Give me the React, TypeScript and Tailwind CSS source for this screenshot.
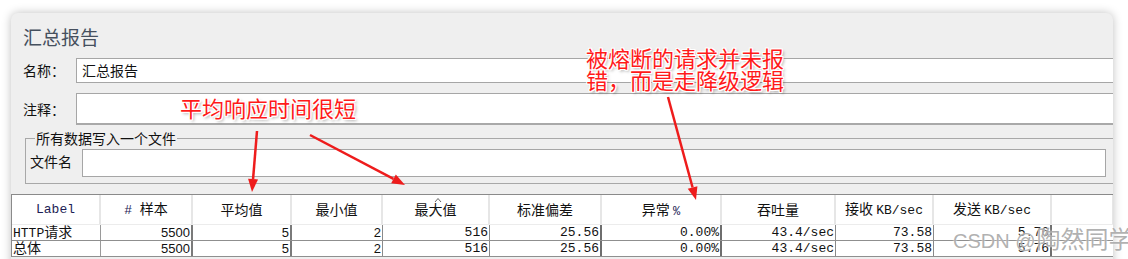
const cjk = "font-['Noto_Sans_CJK_SC','Noto_Sans',sans-serif]";
const mono = "font-['Liberation_Mono','Noto_Sans_CJK_SC',monospace]";

type Col = { w: string; head: React.ReactNode; sep: string };

const cols: Col[] = [
  { w: "w-[89px]", head: <span className={`${mono} text-[13px] text-[#1d1d55]`}>Label</span>, sep: "border-r border-r-[#9a9a9a]" },
  {
    w: "w-[92px]",
    head: (
      <span>
        <span className={`${mono} text-[13px] text-[#1d1d55]`}># </span>样本
      </span>
    ),
    sep: "border-r-2 border-r-[#7a7a7a]",
  },
  { w: "w-[99px]", head: "平均值", sep: "border-r-2 border-r-[#7a7a7a]" },
  { w: "w-[91px]", head: "最小值", sep: "border-r border-r-[#8a8a8a]" },
  { w: "w-[107px]", head: "最大值", sep: "border-r border-r-[#8a8a8a]" },
  { w: "w-[112px]", head: "标准偏差", sep: "border-r-2 border-r-[#6e6e6e]" },
  {
    w: "w-[120px]",
    head: (
      <span>
        异常 <span className={`${mono} text-[12px] text-[#1d1d55]`}>%</span>
      </span>
    ),
    sep: "border-r-2 border-r-[#6e6e6e]",
  },
  { w: "w-[114px]", head: "吞吐量", sep: "border-r border-r-[#8a8a8a]" },
  {
    w: "w-[98px]",
    head: (
      <span>
        接收 <span className={`${mono} text-[13px]`}>KB/sec</span>
      </span>
    ),
    sep: "border-r border-r-[#8a8a8a]",
  },
  {
    w: "w-[118px]",
    head: (
      <span>
        发送 <span className={`${mono} text-[13px]`}>KB/sec</span>
      </span>
    ),
    sep: "border-r-2 border-r-[#6e6e6e]",
  },
];

const rows = [
  ["HTTP请求", "5500", "5", "2", "516", "25.56", "0.00%", "43.4/sec", "73.58", "5.76"],
  ["总体", "5500", "5", "2", "516", "25.56", "0.00%", "43.4/sec", "73.58", "5.76"],
];

function Arrow({ x1, y1, x2, y2 }: { x1: number; y1: number; x2: number; y2: number }) {
  const a = Math.atan2(y2 - y1, x2 - x1);
  const len = 13;
  const half = 5;
  const bx = x2 - len * Math.cos(a);
  const by = y2 - len * Math.sin(a);
  const px = -Math.sin(a) * half;
  const py = Math.cos(a) * half;
  return (
    <g>
      <line x1={x1} y1={y1} x2={bx} y2={by} stroke="#ee1c1c" strokeWidth="2.5" />
      <polygon points={`${x2},${y2} ${bx + px},${by + py} ${bx - px},${by - py}`} fill="#ee1c1c" />
    </g>
  );
}

const halo =
  "[text-shadow:1px_0_0_#fff,-1px_0_0_#fff,0_1px_0_#fff,0_-1px_0_#fff,1px_1px_0_#fff,-1px_-1px_0_#fff,1px_-1px_0_#fff,-1px_1px_0_#fff,2px_2px_3px_rgba(0,0,0,0.35)]";

export default function App() {
  return (
    <div className={`relative w-[1128px] h-[259px] overflow-hidden bg-white pl-[11px] pt-[13px] ${cjk}`}>
      <div className="w-[1102px] h-[260px] overflow-hidden rounded-t-[7px] bg-[#efefef] shadow-[0_0_10px_rgba(0,0,0,0.25)]">
        <div className="pl-[12px] pt-[12px] text-[19px] leading-[24px] text-[#46505e]">汇总报告</div>

        <div className="mt-[9px] flex items-center">
          <div className="w-[65px] pl-[12px] text-[14px] text-[#111]">名称：</div>
          <div className="flex h-[25px] flex-1 items-center border-y border-l border-[#a6a6a6] bg-white pl-[5px] text-[14px] text-[#111]">
            汇总报告
          </div>
        </div>

        <div className="mt-[10px] flex items-center">
          <div className="w-[65px] pl-[12px] text-[14px] text-[#111]">注释：</div>
          <div className="h-[32px] flex-1 border-t border-l border-b-2 border-t-[#a6a6a6] border-l-[#a6a6a6] border-b-[#a9a9a9] bg-white" />
        </div>

        <div className="relative ml-[14px] mt-[13px] flex h-[46px] items-center border border-r-0 border-[#a8a8a8]">
          <div className="absolute left-[9px] top-[-10px] bg-[#efefef] px-[1px] text-[14px] leading-[18px] text-[#111]">
            所有数据写入一个文件
          </div>
          <div className="w-[56px] pl-[4px] pt-[1px] text-[14px] text-[#111]">文件名</div>
          <div className="mr-[7px] mt-[4px] h-[28px] flex-1 border border-[#a6a6a6] bg-white" />
        </div>

        <div className="mt-[10px] border-t border-l border-[#8a8a8a] bg-white text-[14px] text-[#111]">
          <div className="flex h-[30px] border-b border-b-[#ececec]">
            {cols.map((c, i) => (
              <div
                key={i}
                className={`relative flex ${c.w} shrink-0 items-center justify-center border-r-2 border-r-[#e6e6e6]`}
              >
                {c.head}
                {i === 4 && (
                  <svg className="absolute left-[51px] top-[2px]" width="8" height="6" viewBox="0 0 8 6">
                    <path d="M1 5 L4 1.5 L7 5" fill="none" stroke="#666" strokeWidth="1" />
                  </svg>
                )}
              </div>
            ))}
            <div className="w-[62px] shrink-0 border-r-2 border-r-[#e6e6e6]" />
          </div>
          {rows.map((r, ri) => (
            <div key={ri} className="flex h-[16px] border-b border-b-[#8f8f8f]">
              {r.map((v, i) => (
                <div
                  key={i}
                  className={`flex ${cols[i].w} shrink-0 items-center leading-[15px] ${cols[i].sep} ${
                    i === 0 ? "justify-start pl-[1px]" : "justify-end pr-[1px]"
                  } ${i === 1 || i === 2 || i === 3 ? "font-['Liberation_Sans',sans-serif]" : mono} ${
                    i === 0 ? "text-[14px]" : "text-[13px]"
                  }`}
                >
                  {i === 0 ? (
                    <span className="whitespace-nowrap">
                      {v.startsWith("HTTP") ? (
                        <>
                          <span className={`${mono} text-[13px]`}>HTTP</span>
                          <span className={cjk}>请求</span>
                        </>
                      ) : (
                        <span className={cjk}>{v}</span>
                      )}
                    </span>
                  ) : (
                    v
                  )}
                </div>
              ))}
            </div>
          ))}
        </div>
      </div>

      <svg className="pointer-events-none absolute left-0 top-0" width="1128" height="259">
        <Arrow x1={257} y1={131} x2={252} y2={192} />
        <Arrow x1={310} y1={135} x2={405} y2={185} />
        <Arrow x1={668} y1={97} x2={696} y2={200} />
      </svg>

      <div className={`absolute left-[180px] top-[94px] text-[22px] leading-[26px] text-[#ff1a1a] ${halo}`}>
        平均响应时间很短
      </div>
      <div className={`absolute left-[586px] top-[46px] text-[22px] leading-[22px] text-[#ff1a1a] ${halo}`}>
        被熔断的请求并未报
        <br />
        错，而是走降级逻辑
      </div>

      <div className="absolute left-[953px] top-[224px] flex items-baseline whitespace-nowrap text-[#a3a3a3]/85 [text-shadow:0_0_2px_#fff]">
        <span className="font-['Liberation_Sans',sans-serif] text-[20px] leading-[28px]">CSDN @</span>
        <span className="ml-[1px] text-[24px] leading-[28px]">陶然同学</span>
      </div>
    </div>
  );
}
